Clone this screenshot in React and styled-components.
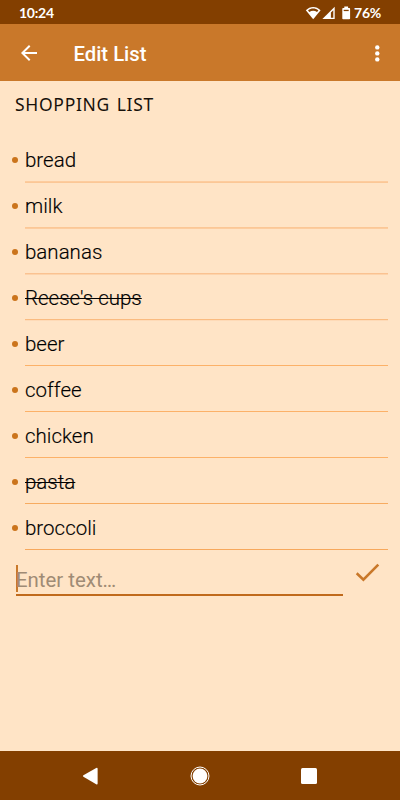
import React from "react";
import styled, { createGlobalStyle } from "styled-components";

const GlobalStyle = createGlobalStyle`
  * {
    box-sizing: border-box;
  }
  body {
    margin: 0;
    background: #ffe4c6;
    font-family: Roboto, sans-serif;
  }
`;

const Container = styled.div`
  width: 400px;
  height: 800px;
  display: flex;
  flex-direction: column;
  background: #ffe4c6;
  overflow: hidden;
`;

const StatusBar = styled.div`
  height: 24px;
  padding: 2px 19px 0 19px;
  display: flex;
  align-items: center;
  justify-content: space-between;
  background: #833f00;
  color: white;
`;

const Time = styled.div`
  font-family: Lato, sans-serif;
  font-size: 14px;
  line-height: 20px;
  font-weight: 700;
  letter-spacing: -0.25px;
`;

const StatusIcons = styled.div`
  display: flex;
  align-items: center;
`;

const Battery = styled(Time)`
  margin-left: 1px;
`;

const AppBar = styled.div`
  height: 57px;
  padding: 0 11px 0 17px;
  display: flex;
  align-items: center;
  background: #c9782a;
  color: white;
`;

const Title = styled.h1`
  flex: 1;
  margin: 0 0 0 32.5px;
  padding-top: 2px;
  font-size: 20.3px;
  line-height: 24px;
  font-weight: 500;
`;

const IconButton = styled.button`
  display: flex;
  padding: 0;
  border: none;
  background: none;
  cursor: pointer;
`;

const Content = styled.div`
  flex: 1;
  padding: 11px 12px 0;
`;

const ListName = styled.h2`
  height: 44px;
  margin: 0;
  padding-left: 3px;
  font-family: "Noto Sans", sans-serif;
  font-size: 17.5px;
  line-height: 25px;
  font-weight: 400;
  letter-spacing: 0.7px;
  word-spacing: 1.5px;
  color: #17110b;
`;

const List = styled.ul`
  margin: 0;
  padding: 0;
  list-style: none;
`;

const Item = styled.li`
  height: 46px;
  display: flex;
  align-items: center;
`;

const Bullet = styled.span`
  width: 6px;
  height: 6px;
  margin: 2px 7px 0 0;
  border-radius: 50%;
  background: #cb741c;
`;

const ItemText = styled.div`
  flex: 1;
  height: 46px;
  border-bottom: 1px solid ${(props) => props.$line};
  box-shadow: 0 1px 0 ${(props) => props.$fade || "transparent"};
  font-size: 20.5px;
  line-height: 49px;
  font-weight: 300;
  color: #000;
  -webkit-text-stroke: 0.15px #000;
  text-decoration: ${(props) => (props.$done ? "line-through" : "none")};
  text-decoration-thickness: 1px;
`;

const AddRow = styled.div`
  display: flex;
  padding: 13px 0 0 4px;
`;

const Input = styled.div`
  width: 327px;
  height: 33px;
  display: flex;
  align-items: flex-start;
  border-bottom: 2px solid #c06a1c;
  color: #9f8b75;
  font-size: 20.4px;
  line-height: 34px;
  font-weight: 400;
`;

const Caret = styled.span`
  width: 2px;
  height: 27px;
  margin: 2px -2px 0 0;
  background: #c9782a;
`;

const AddButton = styled(IconButton)`
  height: 24px;
  margin-left: 10px;
`;

const NavBar = styled.div`
  height: 49px;
  display: flex;
  align-items: center;
  justify-content: space-between;
  padding: 0 79px 0 78px;
  background: #833f00;
`;

const items = [
  { text: "bread", line: "#fdcc9e", fade: "#fbc796" },
  { text: "milk", line: "#fbc796", fade: "#fdcc9e" },
  { text: "bananas", line: "#fac291", fade: "#fdd3ab" },
  { text: "Reese's cups", done: true, line: "#fabb80", fade: "#fedab7" },
  { text: "beer", line: "#fcb168" },
  { text: "coffee", line: "#fcb168" },
  { text: "chicken", line: "#fcb168" },
  { text: "pasta", done: true, line: "#f7ab60" },
  { text: "broccoli", line: "#f7a85c" },
];

const App = () => {
  return (
    <Container>
      <GlobalStyle />
      <StatusBar>
        <Time>10:24</Time>
        <StatusIcons>
          <svg width="48" height="16" viewBox="0 0 48 16" fill="white">
            <path d="M0.8 5.3C5 0.8 11.4 0.8 15.6 5.3L8.2 14.2Z" />
            <path
              d="M3 5.4C6.2 2.9 10.2 2.9 13.4 5.4L12 7C9.6 5.3 6.8 5.3 4.4 7Z"
              fill="#833f00"
            />
            <path d="M29.7 1.8V14H17.4Z" />
            <path d="M28.3 5.2V12.7H25.9V7.6Z" fill="#833f00" />
            <path d="M39.3 1.6h3.8v1.3h1.2q.8 0 .8.8v9.8q0 .8-.8.8h-6.2q-.8 0-.8-.8V3.7q0-.8.8-.8h1.2z" />
            <path d="M38.7 4.8h5v1.3h-5z" fill="#833f00" />
          </svg>
          <Battery>76%</Battery>
        </StatusIcons>
      </StatusBar>
      <AppBar>
        <IconButton>
          <svg width="24" height="24" viewBox="0 0 24 24" fill="white">
            <path d="M20 11H7.83l5.59-5.59L12 4l-8 8 8 8 1.41-1.41L7.83 13H20v-2z" />
          </svg>
        </IconButton>
        <Title>Edit List</Title>
        <IconButton>
          <svg width="24" height="24" viewBox="0 0 24 24" fill="white">
            <circle cx="12.3" cy="6.4" r="2.2" />
            <circle cx="12.3" cy="12.4" r="2.2" />
            <circle cx="12.3" cy="18.4" r="2.2" />
          </svg>
        </IconButton>
      </AppBar>
      <Content>
        <ListName>SHOPPING LIST</ListName>
        <List>
          {items.map((item) => (
            <Item key={item.text}>
              <Bullet />
              <ItemText $done={item.done} $line={item.line} $fade={item.fade}>
                {item.text}
              </ItemText>
            </Item>
          ))}
        </List>
        <AddRow>
          <Input>
            <Caret />
            Enter text…
          </Input>
          <AddButton>
            <svg width="28" height="24" viewBox="0 0 28 24" fill="none">
              <path
                d="M3.7 10.2L10.4 16.6L25.3 1.6"
                stroke="#c9782a"
                strokeWidth="2.6"
              />
            </svg>
          </AddButton>
        </AddRow>
      </Content>
      <NavBar>
        <svg width="24" height="24" viewBox="0 0 24 24" fill="white">
          <path d="M5.4 11.2L18.2 4q1.4-.6 1.4.8v14.6q0 1.4-1.4.8L5.4 12.8q-1-.8 0-1.6z" />
        </svg>
        <svg width="24" height="24" viewBox="0 0 24 24" fill="white">
          <circle cx="12" cy="12" r="7.4" />
          <circle cx="12" cy="12" r="9" fill="none" stroke="white" />
        </svg>
        <svg width="24" height="24" viewBox="0 0 24 24" fill="white">
          <rect x="4" y="4" width="16" height="16" rx="1.5" />
        </svg>
      </NavBar>
    </Container>
  );
};

export default App;
